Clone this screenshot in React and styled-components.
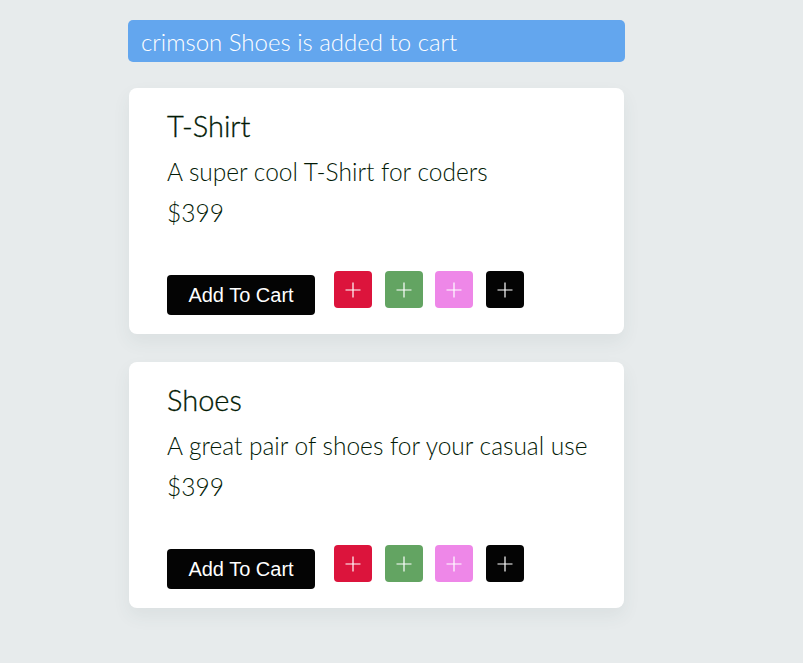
import React from "react";
import styled, { createGlobalStyle } from "styled-components";

const GlobalStyle = createGlobalStyle`
  body {
    margin: 0;
    background-color: #e7ebec;
    font-family: Lato, "Open Sans", sans-serif;
  }
`;

const Page = styled.div`
  width: 497px;
  margin-left: 128px;
  padding-top: 20px;
  padding-bottom: 40px;
`;

const Toast = styled.div`
  height: 42px;
  display: flex;
  align-items: center;
  padding-left: 13px;
  background-color: #63a6ee;
  border-radius: 5px;
  color: #fff;
  font-weight: 300;
  font-size: 24px;
`;

const Card = styled.div`
  box-sizing: border-box;
  height: 246px;
  margin: ${(p) => (p.first ? "26px" : "28px")} 1px 0;
  padding: 21px 38px 0;
  background-color: #fff;
  border-radius: 8px;
  box-shadow: 0 8px 18px rgba(60, 80, 90, 0.07);
  white-space: nowrap;
`;

const Title = styled.div`
  font-size: 29px;
  font-weight: 300;
  line-height: 34px;
  color: #021a05;
  -webkit-text-stroke: 0.3px #021a05;
`;

const Description = styled.div`
  margin-top: 14px;
  font-size: 24.5px;
  font-weight: 300;
  line-height: 29px;
  color: #031a06;
`;

const Price = styled.div`
  margin-top: 12px;
  font-size: 24.5px;
  font-weight: 300;
  line-height: 29px;
  color: #031a06;
`;

const Actions = styled.div`
  display: flex;
  align-items: flex-start;
  margin-top: 44px;
`;

const CartButton = styled.button`
  width: 148px;
  height: 40px;
  margin-top: 4px;
  margin-right: 19px;
  padding: 0;
  border: none;
  border-radius: 4px;
  background-color: #040404;
  color: #fff;
  font-family: "Liberation Sans", Arial, sans-serif;
  font-size: 20px;
`;

const Swatch = styled.button`
  width: 38px;
  height: 37px;
  margin-right: 12.5px;
  padding: 0;
  border: none;
  border-radius: 4px;
  background-color: ${(p) => p.color};
  color: #fff;
  display: flex;
  align-items: center;
  justify-content: center;
`;

const PlusIcon = () => (
  <svg width="16" height="16" viewBox="0 0 16 16">
    <path d="M8 0.5V15.5M0.5 8H15.5" stroke="#fff" strokeWidth="1.2" fill="none" />
  </svg>
);

const colors = ["#dc143c", "#63a462", "#ee87e8", "#040404"];

const products = [
  { name: "T-Shirt", desc: "A super cool T-Shirt for coders", price: 399 },
  { name: "Shoes", desc: "A great pair of shoes for your casual use", price: 399 },
];

export default function App() {
  return (
    <>
      <GlobalStyle />
      <Page>
        <Toast>crimson Shoes is added to cart</Toast>
        {products.map((item, i) => (
          <Card key={item.name} first={i === 0}>
            <Title>{item.name}</Title>
            <Description>{item.desc}</Description>
            <Price>${item.price}</Price>
            <Actions>
              <CartButton>Add To Cart</CartButton>
              {colors.map((c) => (
                <Swatch key={c} color={c}>
                  <PlusIcon />
                </Swatch>
              ))}
            </Actions>
          </Card>
        ))}
      </Page>
    </>
  );
}
